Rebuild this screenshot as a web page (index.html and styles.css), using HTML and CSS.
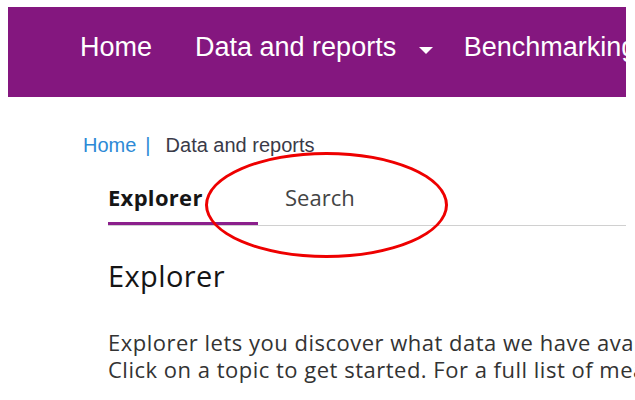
FILE: index.html
```html
<!DOCTYPE html>
<html lang="en">
<head>
  <meta charset="UTF-8">
  <title>Data and reports</title>
  <meta name="viewport" content="width=device-width, initial-scale=1.0">
  <link rel="stylesheet" href="styles.css">
</head>
<body>
  <header class="topbar">
    <nav class="nav">
      <a class="nav-item" href="#">Home</a>
      <a class="nav-item dropdown" href="#">Data and reports <span class="caret"></span></a>
      <a class="nav-item" href="#">Benchmarking</a>
    </nav>
  </header>

  <div class="breadcrumb">
    <a href="#">Home</a><span class="sep">|</span><span class="current">Data and reports</span>
  </div>

  <main class="content">
    <div class="tabs">
      <a class="tab active" href="#">Explorer</a>
      <a class="tab" href="#">Search</a>
    </div>

    <h1>Explorer</h1>
    <p class="intro">
      Explorer lets you discover what data we have available.<br>
      Click on a topic to get started. For a full list of measures see the list.
    </p>
  </main>

  <!-- anotación sobre la pestaña -->
  <div class="highlight"></div>
</body>
</html>
```

FILE: styles.css
```css
html, body {
  overflow: hidden;
}

body {
  margin: 7px 0 0 8px;
  background: #fff;
  width: 700px;
}

/* Barra superior */
.topbar {
  background: #84177f;
  width: 618px;
  height: 90px;
  overflow: hidden;
  box-sizing: border-box;
  padding: 25px 0 0 72px;
}

.nav {
  display: flex;
  white-space: nowrap;
  font-family: "Liberation Sans", Arial, sans-serif;
  font-size: 27px;
  line-height: 31px;
}

.nav-item {
  color: #fff;
  text-decoration: none;
  margin-right: 43px;
}

.nav-item.dropdown {
  margin-right: 31px;
}

.caret {
  display: inline-block;
  vertical-align: middle;
  margin-left: 15px;
  border-left: 7.5px solid transparent;
  border-right: 7.5px solid transparent;
  border-top: 7px solid #fff;
  position: relative;
  top: 2px;
}

/* Migas de pan */
.breadcrumb {
  margin: 36px 0 0 75px;
  font-family: "Liberation Sans", Arial, sans-serif;
  font-size: 20px;
  line-height: 24px;
  color: #3a3a48;
}

.breadcrumb a {
  color: #2d8ad6;
  text-decoration: none;
}

.breadcrumb .sep {
  color: #2d8ad6;
  margin: 0 15px 0 9px;
}

/* Contenido */
.content {
  margin: 24.5px 0 0 100px;
  width: 518px;
  font-family: "Open Sans", "Noto Sans", sans-serif;
}

.tabs {
  display: flex;
  border-bottom: 1px solid #d0d0d0;
}

.tab {
  width: 150px;
  box-sizing: border-box;
  font-size: 22px;
  line-height: 30px;
  padding-bottom: 10.5px;
  color: #444;
  text-decoration: none;
  border-bottom: 3px solid transparent;
}

.tab + .tab {
  padding-left: 27px;
}

.tab.active {
  font-weight: bold;
  color: #161616;
  border-bottom-color: #8b1f8c;
  letter-spacing: 0.3px;
}

h1 {
  margin: 31.5px 0 0;
  font-size: 29px;
  font-weight: normal;
  line-height: 36px;
  color: #151515;
  letter-spacing: 0.4px;
}

.intro {
  margin: 35px 0 0;
  font-size: 22px;
  line-height: 27px;
  color: #333;
  white-space: nowrap;
  letter-spacing: 0.5px;
}

/* Elipse roja encima de la pestaña */
.highlight {
  position: absolute;
  left: 205px;
  top: 152px;
  width: 243px;
  height: 106px;
  box-sizing: border-box;
  border: 3px solid #ee0000;
  border-radius: 50%;
}
```
